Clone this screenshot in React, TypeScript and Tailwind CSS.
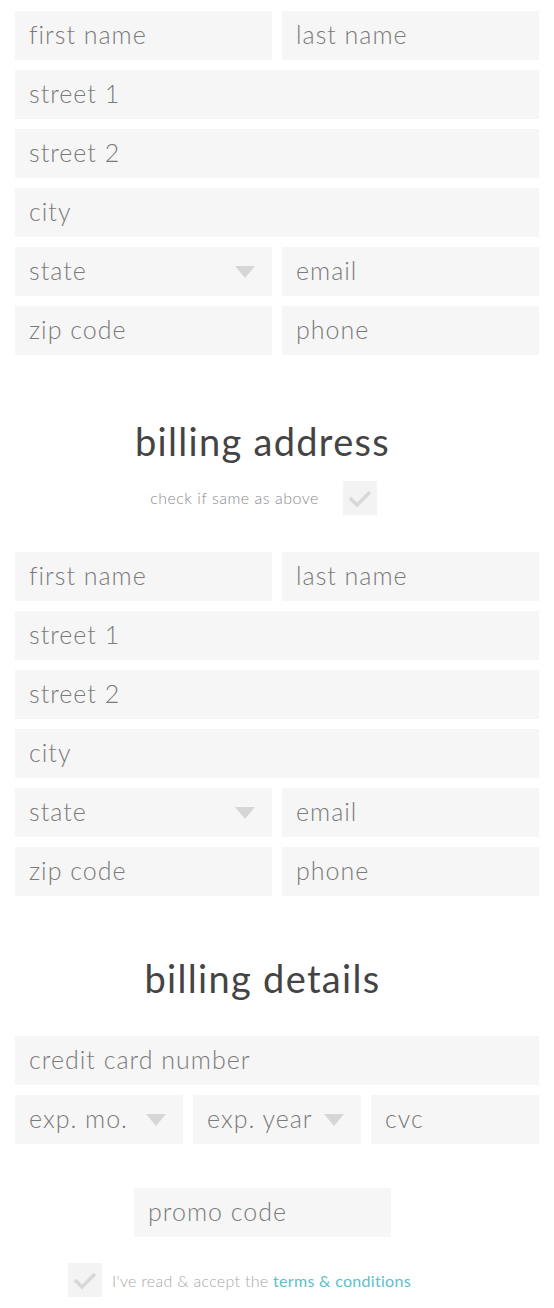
import React from "react";

const fieldText = "text-[25px] font-light text-[#7a7a7a] tracking-[1px] leading-none pb-[2px]";

function Field({ label, arrow, className = "" }: { label: string; arrow?: boolean; className?: string }) {
  return (
    <div className={`h-[49px] bg-[#f6f6f6] flex items-center justify-between pl-[14px] pr-[17px] ${className}`}>
      <span className={fieldText}>{label}</span>
      {arrow && (
        <svg width="20" height="12" viewBox="0 0 20 12" className="shrink-0">
          <polygon points="0,0 20,0 10,12" fill="#d6d6d6" />
        </svg>
      )}
    </div>
  );
}

function Check() {
  return (
    <div className="w-[34px] h-[34px] bg-[#f3f3f3] flex items-center justify-center">
      <svg width="26" height="20" viewBox="0 0 26 20">
        <polyline points="3,10 10,17 23,4" fill="none" stroke="#d8d8d8" strokeWidth="3.5" />
      </svg>
    </div>
  );
}

function AddressBlock() {
  return (
    <div className="flex flex-col gap-[10px]">
      <div className="grid grid-cols-2 gap-[10px]">
        <Field label="first name" />
        <Field label="last name" />
      </div>
      <Field label="street 1" />
      <Field label="street 2" />
      <Field label="city" />
      <div className="grid grid-cols-2 gap-[10px]">
        <Field label="state" arrow />
        <Field label="email" />
      </div>
      <div className="grid grid-cols-2 gap-[10px]">
        <Field label="zip code" />
        <Field label="phone" />
      </div>
    </div>
  );
}

export default function App() {
  return (
    <div
      className="w-[554px] h-[1308px] bg-white overflow-hidden"
      style={{ fontFamily: "Lato, 'Open Sans', sans-serif" }}
    >
      <div className="px-[15px] pt-[11px]">
        <AddressBlock />
      </div>

      <div className="w-[525px] flex flex-col items-center mt-[62px]">
        <h2 className="text-[38px] leading-[48px] font-normal tracking-[1.3px] text-[#444]">billing address</h2>
        <div className="flex items-center gap-[24px] mt-[16px] ml-[2px]">
          <span className="text-[16px] font-light tracking-[0.5px] text-[#8a8a8a]">check if same as above</span>
          <Check />
        </div>
      </div>

      <div className="px-[15px] mt-[37px]">
        <AddressBlock />
      </div>

      <div className="w-[525px] flex justify-center mt-[58px]">
        <h2 className="text-[38px] leading-[48px] font-normal tracking-[1.3px] text-[#444]">billing details</h2>
      </div>

      <div className="px-[15px] mt-[34px] flex flex-col gap-[10px]">
        <Field label="credit card number" />
        <div className="grid grid-cols-3 gap-[10px]">
          <Field label="exp. mo." arrow />
          <Field label="exp. year" arrow />
          <Field label="cvc" />
        </div>
      </div>

      <div className="w-[525px] flex justify-center mt-[44px]">
        <div className="w-[257px]">
          <Field label="promo code" />
        </div>
      </div>

      <div className="flex items-center gap-[10px] pl-[68px] mt-[26px]">
        <Check />
        <span className="text-[16px] font-light tracking-[0.3px] text-[#a8a8a8] pt-[2px]">
          I've read &amp; accept the <span className="font-normal text-[#5cbfca]">terms &amp; conditions</span>
        </span>
      </div>
    </div>
  );
}
